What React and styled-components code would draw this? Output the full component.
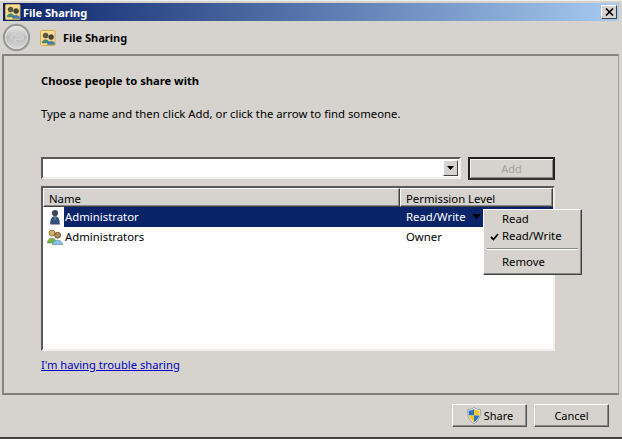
import React from 'react';
import styled, { createGlobalStyle } from 'styled-components';

const GlobalStyle = createGlobalStyle`
  html, body {
    margin: 0;
    padding: 0;
    background: #d6d3ce;
  }
  body {
    font-family: "Noto Sans", "DejaVu Sans", sans-serif;
    font-size: 11.35px;
    color: #000;
  }
`;

const Win = styled.div`
  width: 622px;
  height: 439px;
  box-sizing: border-box;
  display: flex;
  flex-direction: column;
  padding: 3px 2px 0 2px;
  background: #d6d3ce;
  border-top: 1px solid #efeeea;
  border-bottom: 2px solid #404040;
  overflow: hidden;
`;

const TitleBar = styled.div`
  height: 18px;
  flex: none;
  margin: -1px 1px 0 1px;
  display: flex;
  align-items: center;
  gap: 2px;
  padding: 0 2px;
  background: linear-gradient(90deg, #0a246a 0%, #a6caf0 100%);
  color: #fff;
  font-weight: 700;
  font-size: 11px;
`;

const TitleText = styled.span`
  flex: 1;
`;

const CloseButton = styled.div`
  width: 16px;
  height: 14px;
  box-sizing: border-box;
  display: flex;
  align-items: center;
  justify-content: center;
  background: #d6d3ce;
  border: 1px solid;
  border-color: #fff #404040 #404040 #fff;
`;

const NavBar = styled.div`
  height: 33px;
  flex: none;
  display: flex;
  align-items: center;
  gap: 9px;
  font-weight: 700;
  font-size: 11px;
`;

const NavTitle = styled.span`
  margin-left: -2px;
`;

const Panel = styled.div`
  height: 341px;
  flex: none;
  box-sizing: border-box;
  margin-right: 1px;
  border: 2px solid #858580;
  border-bottom-color: #7f7f7a;
  border-right-width: 1px;
  border-right-color: #a0a09a;
  padding: 17px 0 0 37px;
  position: relative;
`;

const Heading = styled.div`
  font-weight: 700;
  font-size: 11.2px;
  line-height: 16px;
`;

const Hint = styled.div`
  margin-top: 17px;
  line-height: 16px;
`;

const InputRow = styled.div`
  display: flex;
  margin-top: 35px;
  gap: 7px;
  width: 514px;
`;

const Combo = styled.div`
  width: 420px;
  height: 22px;
  box-sizing: border-box;
  background: #fff;
  border: 2px solid;
  border-color: #5a5a5a #efeeea #efeeea #5a5a5a;
  display: flex;
  justify-content: flex-end;
  padding: 1px;
`;

const ComboArrow = styled.div`
  width: 15px;
  box-sizing: border-box;
  background: #d6d3ce;
  border: 1px solid;
  border-color: #fff #404040 #404040 #fff;
  display: flex;
  align-items: center;
  justify-content: center;
`;

const Button = styled.div`
  height: 23px;
  width: ${(p) => p.$w}px;
  box-sizing: border-box;
  background: #d6d3ce;
  display: flex;
  align-items: center;
  justify-content: center;
  gap: 2px;
  font-size: 11px;
  color: ${(p) => (p.$disabled ? '#a3a19c' : '#000')};
  border: ${(p) => (p.$disabled ? '2px solid' : '1px solid')};
  border-color: ${(p) => (p.$disabled ? '#222 #222 #333 #222' : '#fff #555 #555 #fff')};
  box-shadow: ${(p) => (p.$disabled ? 'inset 1px 1px 0 #f4f3f0, inset -1px -1px 0 #8a8a86' : 'inset -1px -1px 0 #8a8a86')};
`;

const ListBox = styled.div`
  margin-top: 6px;
  width: 514px;
  height: 165px;
  box-sizing: border-box;
  background: #fff;
  border: 2px solid;
  border-color: #5a5a5a #efeeea #efeeea #5a5a5a;
  display: flex;
  flex-direction: column;
`;

const HeaderRow = styled.div`
  display: grid;
  grid-template-columns: 357px 1fr;
  height: 19px;
  flex: none;
`;

const HeaderCell = styled.div`
  box-sizing: border-box;
  background: #d6d3ce;
  padding: 2px 0 0 5px;
  display: flex;
  align-items: center;
  border: 1px solid;
  border-color: #fff #404040 #404040 #fff;
  box-shadow: inset -1px -1px 0 #8a8a86;
`;

const Row = styled.div`
  display: grid;
  grid-template-columns: 357px 1fr;
  height: 20px;
  flex: none;
  align-items: stretch;
`;

const NameCell = styled.div`
  display: flex;
  align-items: center;
  padding-left: 4px;
  gap: 1px;
`;

const Label = styled.span`
  flex: 1;
  align-self: stretch;
  display: flex;
  align-items: center;
  padding: 0 0 1px 1px;
  background: ${(p) => (p.$selected ? '#0a246a' : 'transparent')};
  color: ${(p) => (p.$selected ? '#fff' : '#000')};
`;

const PermCell = styled.div`
  display: flex;
  align-items: center;
  gap: 6px;
  padding: 0 0 1px 6px;
  background: ${(p) => (p.$selected ? '#0a246a' : 'transparent')};
  color: ${(p) => (p.$selected ? '#fff' : '#000')};
`;

const Menu = styled.div`
  position: absolute;
  left: 479px;
  top: 153px;
  width: 99px;
  height: 66px;
  box-sizing: border-box;
  background: #d6d3ce;
  border: 1px solid;
  border-color: #fff #404040 #404040 #fff;
  box-shadow: inset -1px -1px 0 #8a8a86;
`;

const MenuItem = styled.div`
  height: 17px;
  display: flex;
  align-items: center;
  padding-left: 18px;
  position: relative;
`;

const MenuCheck = styled.svg`
  position: absolute;
  left: 6px;
  top: 6px;
`;

const MenuSep = styled.div`
  height: 0;
  margin: 4px 3px 3px 3px;
  border-top: 1px solid #8a8a86;
  border-bottom: 1px solid #fff;
`;

const TroubleLink = styled.a`
  display: block;
  margin-top: 6px;
  line-height: 16px;
  font-size: 11.2px;
  color: #0000c8;
  text-decoration: underline;
`;

const Footer = styled.div`
  flex: 1;
  display: flex;
  justify-content: flex-end;
  align-items: flex-start;
  gap: 7px;
  padding: 9px 11px 0 0;
`;

const BackIcon = () => (
  <svg width="29" height="29" viewBox="0 0 30 30">
    <defs>
      <linearGradient id="bk" x1="0" y1="0" x2="0" y2="1">
        <stop offset="0" stopColor="#e9e9e8" />
        <stop offset="0.5" stopColor="#bdbdbd" />
        <stop offset="1" stopColor="#d8d8d8" />
      </linearGradient>
    </defs>
    <circle cx="15" cy="15" r="13" fill="url(#bk)" stroke="#989896" strokeWidth="2.2" />
    <circle cx="15" cy="15" r="11.4" fill="none" stroke="#ecebe9" strokeWidth="0.8" />
    <path d="M8 15 L14 10.5 V13.3 H22 V16.7 H14 V19.5 Z" fill="#c6c6c6" stroke="#dedede" strokeWidth="0.7" />
  </svg>
);

const Person = ({ x, y, head, body }) => (
  <g transform={`translate(${x} ${y})`}>
    <circle cx="3.6" cy="2.6" r="2.5" fill={head} stroke="#3a3a30" strokeWidth="0.5" />
    <path d="M0 10 C0 5.5 7.2 5.5 7.2 10 Z" fill={body} stroke="#4a5a50" strokeWidth="0.4" />
  </g>
);

const FolderUsersIcon = () => (
  <svg width="16" height="16" viewBox="0 0 16 16">
    <rect x="0.5" y="0.5" width="14.5" height="15" rx="1" fill="#f7de94" stroke="#d4a94e" />
    <Person x={2} y={3} head="#5e5a3a" body="#3f8f7a" />
    <Person x={7.5} y={4.5} head="#44423a" body="#3f7fc0" />
  </svg>
);

const UsersIcon = () => (
  <svg width="16" height="16" viewBox="0 0 16 16">
    <circle cx="5" cy="4" r="3" fill="#d8b060" stroke="#5a4a20" strokeWidth="0.6" />
    <path d="M0.5 14 C0.5 7.5 9.5 7.5 9.5 14 Z" fill="#7cb342" stroke="#4d7a28" strokeWidth="0.5" />
    <circle cx="10.6" cy="6.2" r="3" fill="#b08a5a" stroke="#3a3226" strokeWidth="0.6" />
    <path d="M5.5 15.5 C5.5 9.8 15.5 9.8 15.5 15.5 Z" fill="#8fc0ea" stroke="#4f7ba8" strokeWidth="0.6" />
  </svg>
);

const UserIcon = () => (
  <svg width="16" height="16" viewBox="0 0 16 16">
    <circle cx="8" cy="4" r="3.1" fill="#3d4658" />
    <path d="M3.2 15.5 C3 9.5 5 7.2 8 7.2 C11 7.2 13 9.5 12.8 15.5 Z" fill="#34507f" />
    <path d="M6 8 L8 12 L10 8 Z" fill="#5a6f90" />
  </svg>
);

const ShieldIcon = () => (
  <svg width="16" height="17" viewBox="0 0 15 17">
    <path d="M7.5 0.5 C9.5 2 11.5 2.5 14 2.5 C14.5 9 12 14 7.5 16.5 C3 14 0.5 9 1 2.5 C3.5 2.5 5.5 2 7.5 0.5 Z" fill="#eef0f2" stroke="#8a96a8" strokeWidth="0.8" />
    <path d="M7.5 2 V8.5 H2.3 C2.1 7 2 5.5 2.1 3.6 C4 3.5 6 3 7.5 2 Z" fill="#2f6fc4" />
    <path d="M7.5 2 C9 3 11 3.5 12.9 3.6 C13 5.5 12.9 7 12.7 8.5 H7.5 Z" fill="#f6c626" />
    <path d="M2.3 8.5 H7.5 V15 C5 13.5 3 11.5 2.3 8.5 Z" fill="#f6c626" />
    <path d="M7.5 8.5 H12.7 C12 11.5 10 13.5 7.5 15 Z" fill="#2f6fc4" />
  </svg>
);

const SmallArrow = ({ w = 7, h = 4 }) => (
  <svg width={w} height={h} viewBox="0 0 7 4">
    <path d="M0 0 H7 L3.5 4 Z" fill="#000" />
  </svg>
);

export default function App() {
  return (
    <>
      <GlobalStyle />
      <Win>
        <TitleBar>
          <FolderUsersIcon />
          <TitleText>File Sharing</TitleText>
          <CloseButton>
            <svg width="9" height="8" viewBox="0 0 9 8">
              <path d="M1 0.5 L8 7.5 M8 0.5 L1 7.5" stroke="#000" strokeWidth="1.6" />
            </svg>
          </CloseButton>
        </TitleBar>
        <NavBar>
          <BackIcon />
          <FolderUsersIcon />
          <NavTitle>File Sharing</NavTitle>
        </NavBar>
        <Panel>
          <Heading>Choose people to share with</Heading>
          <Hint>Type a name and then click Add, or click the arrow to find someone.</Hint>
          <InputRow>
            <Combo>
              <ComboArrow>
                <SmallArrow />
              </ComboArrow>
            </Combo>
            <Button $w={87} $disabled>Add</Button>
          </InputRow>
          <ListBox>
            <HeaderRow>
              <HeaderCell>Name</HeaderCell>
              <HeaderCell>Permission Level</HeaderCell>
            </HeaderRow>
            <Row>
              <NameCell>
                <UserIcon />
                <Label $selected>Administrator</Label>
              </NameCell>
              <PermCell $selected>
                Read/Write
                <SmallArrow w={9} h={5} />
              </PermCell>
            </Row>
            <Row>
              <NameCell>
                <UsersIcon />
                <Label>Administrators</Label>
              </NameCell>
              <PermCell>Owner</PermCell>
            </Row>
          </ListBox>
          <TroubleLink>I'm having trouble sharing</TroubleLink>
          <Menu>
            <MenuItem>Read</MenuItem>
            <MenuItem>
              <MenuCheck width="9" height="8" viewBox="0 0 9 8">
                <path d="M1 4 L3.5 6.5 L8 1" fill="none" stroke="#000" strokeWidth="1.8" />
              </MenuCheck>
              Read/Write
            </MenuItem>
            <MenuSep />
            <MenuItem>Remove</MenuItem>
          </Menu>
        </Panel>
        <Footer>
          <Button $w={75}>
            <ShieldIcon />
            Share
          </Button>
          <Button $w={75}>Cancel</Button>
        </Footer>
      </Win>
    </>
  );
}
